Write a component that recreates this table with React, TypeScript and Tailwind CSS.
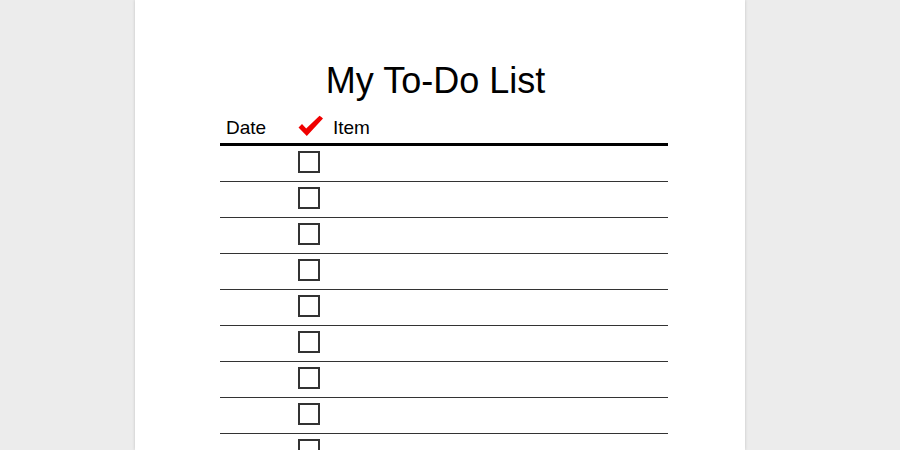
const rows = Array.from({ length: 9 });

function RedCheck() {
  return (
    <svg width="26" height="22" viewBox="0 0 26 22" className="block">
      <path
        d="M0.5 12.5 L4 9 L8.2 13.6 L21.5 0.8 C22.8 1.6 24 2.6 25 3.6 L8.8 21 Z"
        fill="#f00000"
        strokeLinejoin="round"
      />
    </svg>
  );
}

export default function App() {
  return (
    <div className="w-[900px] h-[450px] overflow-hidden bg-[#ececec] flex justify-center font-['Liberation_Sans',Arial,sans-serif] text-black">
      <div className="ml-[-20px] w-[610px] h-[450px] bg-white shadow-[0_0_3px_rgba(0,0,0,0.18)] pl-[85px] pr-[77px] pt-[61px]">
        <h1 className="text-[36px] leading-[40px] text-center pr-[17px]">My To-Do List</h1>
        <div className="mt-[15px] flex items-end h-[30px] border-b-[3px] border-black pb-[4px]">
          <span className="w-[78px] pl-[6px] text-[19px] leading-[22px]">Date</span>
          <span className="w-[35px] pb-[2px]">
            <RedCheck />
          </span>
          <span className="text-[19px] leading-[22px]">Item</span>
        </div>
        {rows.map((_, i) => (
          <div key={i} className="h-[36px] border-b border-[#333] flex items-center">
            <div className="ml-[78px] mt-[-3px] w-[22px] h-[22px] border-2 border-[#333]" />
          </div>
        ))}
      </div>
    </div>
  );
}
